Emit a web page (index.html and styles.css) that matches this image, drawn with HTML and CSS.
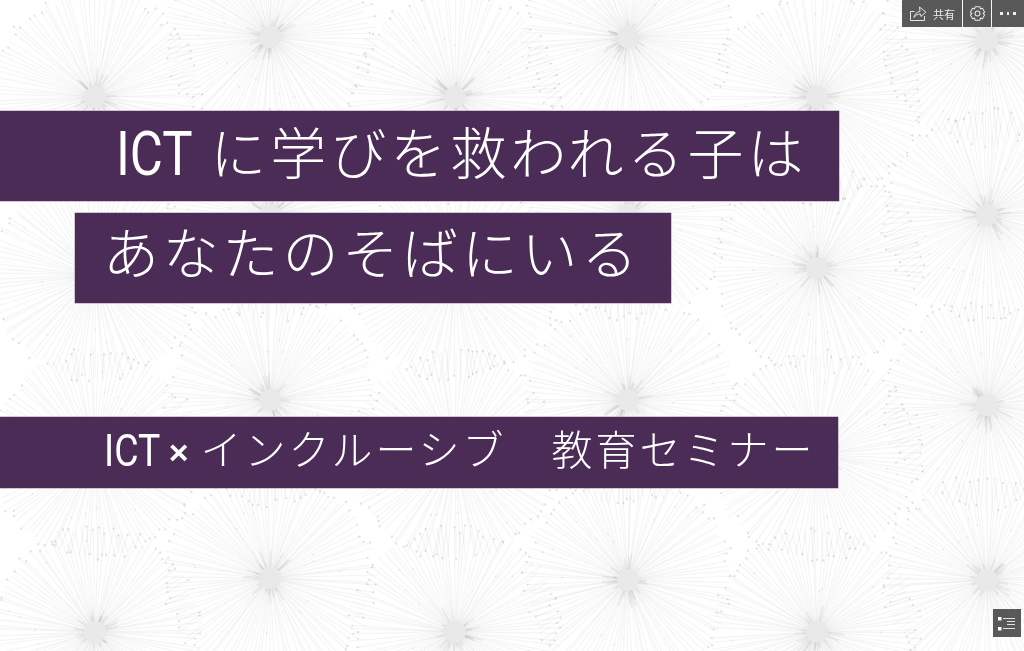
FILE: index.html
```html
<!DOCTYPE html>
<html lang="ja">
<head>
<meta charset="utf-8">
<title>ICT に学びを救われる子は</title>
<link rel="stylesheet" href="styles.css">
</head>
<body>
<canvas id="pattern" class="pattern" width="1024" height="651"></canvas>
<main class="slide">
  <h1 class="bar bar-one"><span class="latin latin-big">ICT</span><span>に学びを救われる子は</span></h1>
  <h1 class="bar bar-two">あなたのそばにいる</h1>
  <h2 class="bar bar-three"><span class="latin latin-small">ICT</span><span class="times">×</span><span>インクルーシブ</span><span class="run-gap">教育セミナー</span></h2>
</main>
<nav class="toolbar">
  <button class="tool tool-share">
    <svg class="icon" viewBox="0 0 18 18" width="18" height="18" fill="none" stroke="#e6e6e6" stroke-width="1"><path d="M5.5 6.500H1.500V15.500H15.500V11"/><path d="M5 12.500C5.300 9.500 7.500 7 11 6.500L10.500 2 16.800 7 12 11.500 11.500 9C9 9 6.500 10 5 12.500Z"/></svg>
    <span class="tool-label">共有</span>
  </button>
  <button class="tool tool-gear">
    <svg class="icon" viewBox="0 0 18 18" width="17" height="17" fill="none" stroke="#e6e6e6" stroke-width="1.1"><path d="M6.600 1.800h4.800l.7 2.200 2.200-.5 2.200 4-1.600 1.500 1.600 1.500-2.200 4-2.200-.5-.7 2.200H6.600l-.7-2.200-2.200.5-2.200-4L3.100 9 1.500 7.500l2.200-4 2.200.5z"/><circle cx="9" cy="9" r="2.600"/></svg>
  </button>
  <button class="tool tool-more">
    <span class="dot"></span><span class="dot"></span><span class="dot"></span>
  </button>
</nav>
<button class="outline-button">
  <svg viewBox="0 0 28 28" width="28" height="28" fill="none" stroke="#e0e0e0" stroke-width="1"><path d="M10 9.500H22M14 12.500H22M14 15.500H22M10 19.500H22"/><rect x="5" y="8" width="3.500" height="3.500" fill="#fff" stroke="none"/><rect x="5" y="18" width="3.500" height="3.500" fill="#fff" stroke="none"/></svg>
</button>
<script src="pattern.js"></script>
</body>
</html>
```
FILE: styles.css
```css
html, body {
  margin: 0;
  padding: 0;
  width: 1024px;
  height: 651px;
  overflow: hidden;
  background: #fff;
}
body {
  position: relative;
  font-family: "Noto Sans CJK JP", "Liberation Sans", sans-serif;
  color: #fff;
}
.pattern {
  position: absolute;
  left: 0;
  top: 0;
  display: block;
  filter: blur(0.6px);
}
.slide {
  position: relative;
  display: flex;
  flex-direction: column;
  align-items: flex-start;
  padding-top: 111px;
}
.bar {
  margin: 0;
  box-sizing: border-box;
  display: flex;
  align-items: center;
  background: #4b2c57;
  box-shadow: 0 0 0 0.5px #a795ae;
  font-weight: 300;
  white-space: pre;
}
.bar-one {
  width: 839px;
  height: 90px;
  padding: 0 0 14px 116px;
  font-size: 56px;
  letter-spacing: 4px;
}
.bar-two {
  width: 596px;
  height: 90px;
  margin: 12px 0 0 75px;
  padding: 0 0 18px 28px;
  font-size: 56px;
  letter-spacing: 3.8px;
}
.bar-three {
  width: 838px;
  height: 71px;
  margin-top: 114px;
  padding: 0 0 12px 104px;
  font-size: 41px;
  letter-spacing: 3px;
}
.latin {
  display: inline-block;
  font-family: Roboto, "Liberation Sans", sans-serif;
  font-weight: 400;
  letter-spacing: 0;
  transform-origin: left center;
}
.latin-big {
  font-size: 62px;
  transform: translateY(4px) scaleX(0.82);
  margin-right: 1px;
}
.latin-small {
  font-size: 45px;
  transform: translateY(4px) scaleX(0.83);
  margin-right: -13px;
}
.times {
  font-family: "Liberation Sans", sans-serif;
  font-weight: 700;
  font-size: 34px;
  transform: translateY(6px);
  margin: 0 12px 0 10px;
  letter-spacing: 0;
}
.run-gap {
  margin-left: 45px;
}
.toolbar {
  position: absolute;
  top: 0;
  right: 0;
  display: flex;
  gap: 1px;
  height: 27px;
}
.tool {
  display: flex;
  align-items: center;
  justify-content: center;
  border: 0;
  padding: 0;
  height: 27px;
  background: #595959;
  color: #eee;
}
.tool-share {
  width: 60px;
  gap: 6px;
}
.tool-gear {
  width: 28px;
}
.tool-more {
  width: 32px;
  gap: 4px;
}
.tool-label {
  font-family: "Noto Sans CJK JP", sans-serif;
  font-size: 11px;
}
.dot {
  width: 2.5px;
  height: 2.5px;
  background: #eee;
}
.outline-button {
  position: absolute;
  left: 993px;
  top: 609px;
  width: 28px;
  height: 28px;
  padding: 0;
  border: 0;
  background: #595959;
}
.outline-button svg {
  display: block;
}
```
FILE: pattern.js
```js
(function () {
  var ctx = document.getElementById('pattern').getContext('2d');
  var seed = 12345;
  function rnd() {
    seed = (seed * 1664525 + 1013904223) % 4294967296;
    return seed / 4294967296;
  }
  var columns = [
    { x: 95, ys: [97, 275, 455, 632] },
    { x: 270, ys: [37, 215, 400, 578] },
    { x: 455, ys: [97, 275, 455, 632] },
    { x: 628, ys: [37, 215, 400, 580] },
    { x: 817, ys: [97, 268, 455, 632] },
    { x: 987, ys: [40, 215, 405, 580] }
  ];
  ctx.fillStyle = '#fff';
  ctx.fillRect(0, 0, 1024, 651);
  ctx.lineCap = 'round';

  function burst(cx, cy) {
    var count = 110;
    for (var i = 0; i < count; i++) {
      var a = (i + rnd() * 0.8) / count * Math.PI * 2;
      var len = 98 + rnd() * 10;
      var ex = cx + Math.cos(a) * len;
      var ey = cy + Math.sin(a) * len;
      ctx.strokeStyle = 'rgba(0,0,0,0.04)';
      ctx.lineWidth = 1.3;
      ctx.beginPath();
      ctx.moveTo(cx, cy);
      ctx.lineTo(ex, ey);
      ctx.stroke();
      if (rnd() < 0.55) {
        ctx.fillStyle = 'rgba(0,0,0,0.09)';
        ctx.beginPath();
        ctx.arc(ex, ey, 1.2, 0, Math.PI * 2);
        ctx.fill();
      }
      if (rnd() < 0.14) {
        var m = 40 + rnd() * 50;
        ctx.fillStyle = 'rgba(0,0,0,0.06)';
        ctx.beginPath();
        ctx.arc(cx + Math.cos(a) * m, cy + Math.sin(a) * m, 1.1, 0, Math.PI * 2);
        ctx.fill();
      }
    }
    for (var j = 0; j < 18; j++) {
      var b = rnd() * Math.PI * 2;
      var spike = 14 + rnd() * 14;
      ctx.strokeStyle = 'rgba(0,0,0,0.05)';
      ctx.lineWidth = 2;
      ctx.beginPath();
      ctx.moveTo(cx, cy);
      ctx.lineTo(cx + Math.cos(b) * spike, cy + Math.sin(b) * spike);
      ctx.stroke();
    }
    ctx.fillStyle = '#e9e9e9';
    ctx.beginPath();
    ctx.arc(cx, cy, 11, 0, Math.PI * 2);
    ctx.fill();
  }

  columns.forEach(function (col) {
    col.ys.forEach(function (y) {
      burst(col.x, y);
    });
  });
})();
```
